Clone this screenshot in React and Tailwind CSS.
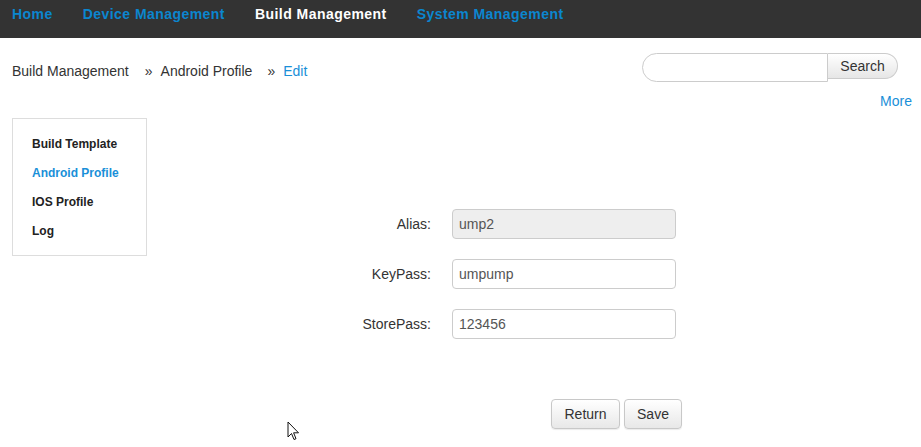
import React from "react";

const navItems = [
  { label: "Home", active: false },
  { label: "Device Management", active: false },
  { label: "Build Management", active: true },
  { label: "System Management", active: false },
];

const sideItems = [
  { label: "Build Template", active: false },
  { label: "Android Profile", active: true },
  { label: "IOS Profile", active: false },
  { label: "Log", active: false },
];

const fields = [
  { label: "Alias:", value: "ump2", readOnly: true },
  { label: "KeyPass:", value: "umpump", readOnly: false },
  { label: "StorePass:", value: "123456", readOnly: false },
];

const btn =
  "h-[30px] px-3 rounded-[4px] border border-[#c8c8c8] bg-gradient-to-b from-white to-[#e8e8e8] text-[14px] text-[#333] shadow-[0_1px_1px_rgba(0,0,0,0.08)]";

const App = () => {
  return (
    <div
      className="relative w-[921px] h-[447px] bg-white text-[#333] overflow-hidden"
      style={{ fontFamily: '"Liberation Sans", Arial, sans-serif' }}
    >
      {/* NAV */}
      <div className="h-[38px] bg-[#333333] flex items-start pt-[5px] pl-3 gap-[30px]">
        {navItems.map((n) => (
          <span
            key={n.label}
            className={`text-[14px] font-bold leading-[18px] tracking-[0.45px] ${n.active ? "text-white" : "text-[#0b86cf]"}`}
          >
            {n.label}
          </span>
        ))}
      </div>

      {/* BREADCRUMB + SEARCH */}
      <div className="flex items-start justify-between pl-3 pr-[23px] mt-[15px] h-[29px]">
        <div className="flex items-center text-[14px] text-[#333] pt-[8px]">
          <span>Build Management</span>
          <span className="ml-[16px] mr-[8px]">»</span>
          <span>Android Profile</span>
          <span className="ml-[15px] mr-[8px]">»</span>
          <span className="text-[#1a8fd8]">Edit</span>
        </div>
        <div className="flex items-start h-[29px]">
          <input
            className="w-[186px] h-[29px] border border-[#ccc] rounded-l-[15px] outline-none px-3 text-[14px]"
            defaultValue=""
          />
          <button className="h-[26px] w-[70px] border border-l-0 border-[#ccc] rounded-r-[13px] bg-gradient-to-b from-white to-[#e6e6e6] text-[14px] text-[#333]">
            Search
          </button>
        </div>
      </div>
      <div className="flex justify-end pr-[9px] mt-[9px]">
        <span className="text-[14px] text-[#1a8fd8]">More</span>
      </div>

      {/* CONTENT */}
      <div className="flex items-start pl-3 mt-[6px]">
        <div className="w-[135px] h-[138px] border border-[#ddd] pl-[19px] pt-[17px] flex flex-col gap-[13px]">
          {sideItems.map((s) => (
            <span
              key={s.label}
              className={`text-[12px] font-bold leading-[16px] ${s.active ? "text-[#1a8fd8]" : "text-[#222]"}`}
            >
              {s.label}
            </span>
          ))}
        </div>

        <div className="ml-[164px] mt-[91px] flex flex-col">
          <div className="flex flex-col gap-[20px]">
            {fields.map((f) => (
              <div key={f.label} className="flex items-center">
                <span className="w-[120px] text-right text-[14px] text-[#333]">{f.label}</span>
                <input
                  readOnly
                  defaultValue={f.value}
                  className={`ml-[21px] w-[224px] h-[30px] border border-[#ccc] rounded-[4px] px-[6px] text-[14px] text-[#555] outline-none ${f.readOnly ? "bg-[#eeeeee]" : "bg-white"}`}
                />
              </div>
            ))}
          </div>
          <div className="flex gap-[4px] mt-[60px] ml-[240px]">
            <button className={`${btn} w-[69px]`}>Return</button>
            <button className={`${btn} w-[58px]`}>Save</button>
          </div>
        </div>
      </div>

      {/* mouse cursor */}
      <svg className="absolute left-[287px] top-[421px]" width="14" height="21" viewBox="0 0 14 21">
        <path
          d="M1 1 L1 16 L4.5 12.5 L7 18.5 L9 17.7 L6.6 11.8 L11.5 11.8 Z"
          fill="white"
          stroke="#111"
          strokeWidth="1"
          strokeLinejoin="round"
        />
      </svg>
    </div>
  );
};

export default App;
